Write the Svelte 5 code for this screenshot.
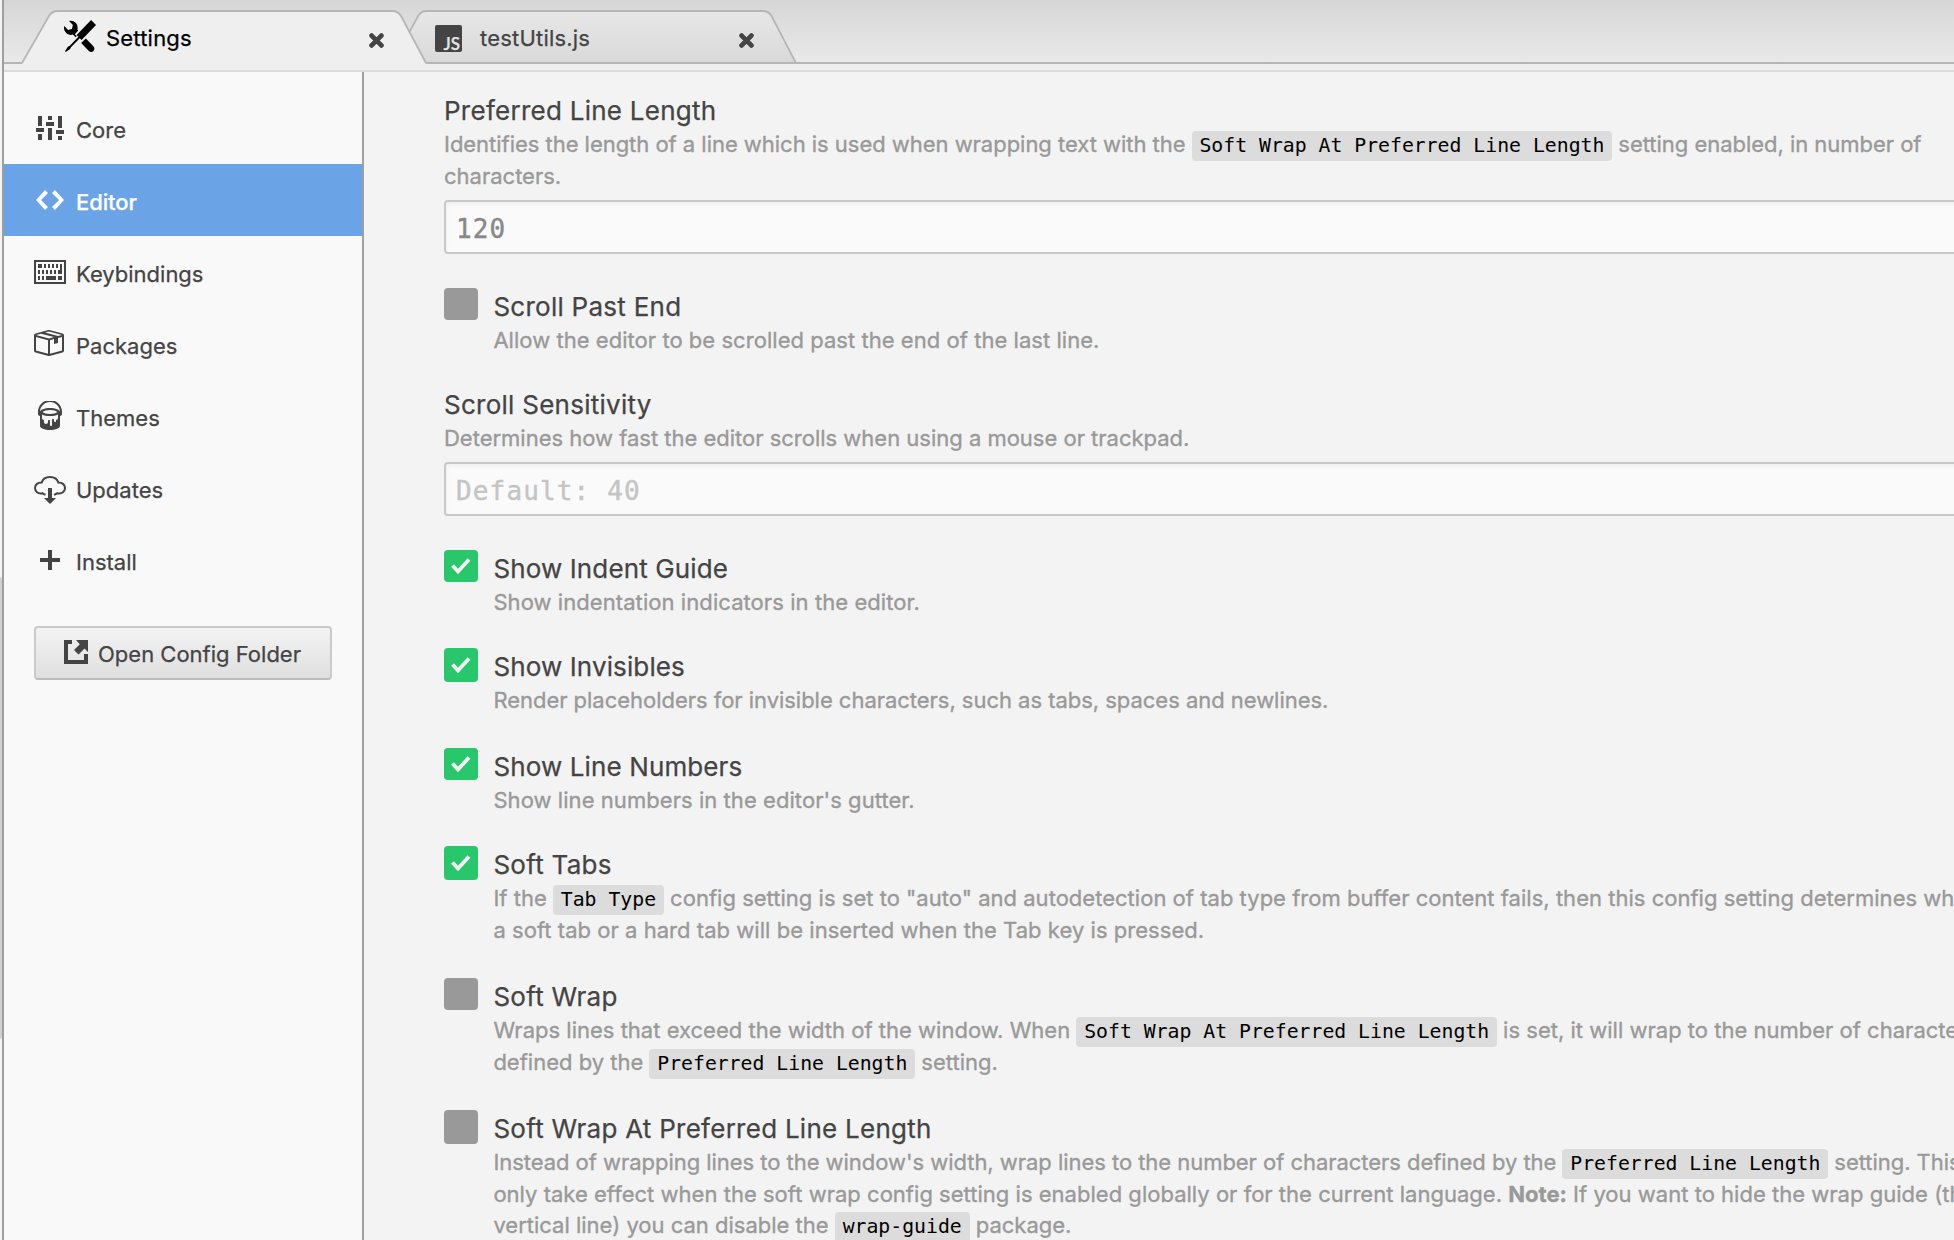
<script>
  const nav = [
    { id: 'core', label: 'Core' },
    { id: 'editor', label: 'Editor', active: true },
    { id: 'keys', label: 'Keybindings' },
    { id: 'packages', label: 'Packages' },
    { id: 'themes', label: 'Themes' },
    { id: 'updates', label: 'Updates' },
    { id: 'install', label: 'Install' }
  ];

  // Description segments: plain strings, { c } for code and { b } for bold.
  // `track` holds the letter spacing of each description line, in px.
  const settings = [
    {
      title: 'Preferred Line Length',
      input: '120',
      track: [-0.03, 0],
      lines: [
        ['Identifies the length of a line which is used when wrapping text with the ', { c: 'Soft Wrap At Preferred Line Length' }, ' setting enabled, in number of'],
        ['characters.']
      ]
    },
    { title: 'Scroll Past End', check: 'off', loose: true, track: [0.04], lines: [['Allow the editor to be scrolled past the end of the last line.']] },
    {
      title: 'Scroll Sensitivity',
      placeholder: 'Default: 40',
      track: [-0.01],
      lines: [['Determines how fast the editor scrolls when using a mouse or trackpad.']]
    },
    { title: 'Show Indent Guide', snug: true, check: 'on', track: [0.07], lines: [['Show indentation indicators in the editor.']] },
    { title: 'Show Invisibles', snug: true, check: 'on', tall: true, loose: true, track: [-0.03], lines: [['Render placeholders for invisible characters, such as tabs, spaces and newlines.']] },
    { title: 'Show Line Numbers', snug: true, check: 'on', track: [0.06], lines: [["Show line numbers in the editor's gutter."]] },
    {
      title: 'Soft Tabs', check: 'on', tall: true, loose: true,
      track: [0.02, 0.04],
      lines: [
        ['If the ', { c: 'Tab Type' }, ' config setting is set to "auto" and autodetection of tab type from buffer content fails, then this config setting determines whether'],
        ['a soft tab or a hard tab will be inserted when the Tab key is pressed.']
      ]
    },
    {
      title: 'Soft Wrap', check: 'off', loose: true,
      track: [0.01, 0],
      lines: [
        ['Wraps lines that exceed the width of the window. When ', { c: 'Soft Wrap At Preferred Line Length' }, ' is set, it will wrap to the number of characters'],
        ['defined by the ', { c: 'Preferred Line Length' }, ' setting.']
      ]
    },
    {
      title: 'Soft Wrap At Preferred Line Length', check: 'off', tall: true,
      track: [-0.04, 0.02, 0],
      lines: [
        ["Instead of wrapping lines to the window's width, wrap lines to the number of characters defined by the ", { c: 'Preferred Line Length' }, ' setting. This will'],
        ['only take effect when the soft wrap config setting is enabled globally or for the current language. ', { b: 'Note:' }, ' If you want to hide the wrap guide (the'],
        ['vertical line) you can disable the ', { c: 'wrap-guide' }, ' package.']
      ]
    }
  ];
</script>

{#snippet close()}
  <svg class="close" width="15" height="15" viewBox="0 0 15 15"><path d="M2.6 2.6l9.8 9.8M12.4 2.6L2.6 12.4" stroke="#444" stroke-width="4.8" stroke-linecap="round" /></svg>
{/snippet}

{#snippet icon(id)}
  <svg class="icon" width="32" height="32" viewBox="0 0 32 32" fill="currentColor">
    {#if id === 'core'}
      <path d="M4 3h4v10H4zM2 15h8v4H2zM4 21h4v6H4zM14 3h4v4h-4zM12 9h8v4h-8zM14 15h4v12h-4zM24 3h4v12h-4zM22 17h8v4h-8zM24 23h4v4h-4z" />
    {:else if id === 'editor'}
      <path transform="translate(2 -1) scale(2)" d="M9.5 3L8 4.5 11.5 8 8 11.5 9.5 13 14 8 9.5 3zm-5 0L0 8l4.5 5L6 11.5 2.5 8 6 4.5 4.5 3z" />
    {:else if id === 'keys'}
      <g transform="translate(0 3)">
        <path fill-rule="evenodd" d="M0 0h32v24H0zM2 2v20h28V2z" />
        <path d="M4 4h4v4H4zM10 4h2v4h-2zM14 4h2v4h-2zM18 4h2v4h-2zM22 4h2v4h-2zM26 4h2v10h-4v-4h2zM4 10h2v4H4zM8 10h2v4H8zM12 10h2v4h-2zM16 10h2v4h-2zM20 10h2v4h-2zM4 16h2v4H4zM8 16h2v4H8zM12 16h10v4H12zM24 16h4v4h-4z" />
      </g>
    {:else if id === 'packages'}
      <path transform="translate(-2 -2) scale(2)" d="M1 4.27v7.47c0 .45.3.84.75.97l6.5 1.73c.16.05.34.05.5 0l6.5-1.73c.45-.13.75-.52.75-.97V4.27c0-.45-.3-.84-.75-.97l-6.5-1.74a1.4 1.4 0 0 0-.5 0L1.75 3.3c-.45.13-.75.52-.75.97zm7 9.09l-6-1.59V5l6 1.61v6.75zM2 4l2.5-.67L11 5.06l-2.5.67L2 4zm13 7.77l-6 1.59V6.61l2-.55V8.5l2-.53V5.53L15 5v6.77zm-2-7.24L6.5 2.8l2-.53L15 4l-2 .53z" />
    {:else if id === 'themes'}
      <path transform="translate(4 -1) scale(2)" d="M6 0C2.69 0 0 2.69 0 6v1c0 .55.45 1 1 1v5c0 1.1 2.24 2 5 2s5-.9 5-2V8c.55 0 1-.45 1-1V6c0-3.31-2.69-6-6-6zm3 10v.5c0 .28-.22.5-.5.5s-.5-.22-.5-.5V10c0-.28-.22-.5-.5-.5s-.5.22-.5.5v2.5c0 .28-.22.5-.5.5s-.5-.22-.5-.5v-2c0-.28-.22-.5-.5-.5s-.5.22-.5.5v.5c0 .55-.45 1-1 1s-1-.45-1-1v-1c-.55 0-1-.45-1-1V7.2c.91.49 2.36.8 4 .8 1.64 0 3.09-.31 4-.8V9c0 .55-.45 1-1 1zM6 7c-1.68 0-3.12-.41-3.71-1C2.88 5.41 4.32 5 6 5c1.68 0 3.12.41 3.71 1-.59.59-2.03 1-3.71 1zm0-3c-2.76 0-5 .89-5 2 0-2.76 2.24-5 5-5s5 2.24 5 5c0-1.1-2.24-2-5-2z" />
    {:else if id === 'updates'}
      <path fill="none" stroke="currentColor" stroke-width="2" d="M11.5 21.8C10 21.3 9.2 20.6 8.5 20.2C4 21.5 1 18.3 1 15C1 11.5 4 9.3 7.7 9.5C8.8 5.800 12 4 16 4S23.200 5.800 24.300 9.500C28 9.300 31 11.500 31 15C31 18.300 28 21.200 23.500 20.200C22.800 20.600 21.500 21.500 20 21.900" />
      <path d="M14 15h4v10h4l-6 6-6-6h4z" />
    {:else}
      <path d="M14 5h4v8h8v4h-8v8h-4v-8H6v-4h8z" />
    {/if}
  </svg>
{/snippet}

<div class="window">
  <div class="edge"><div class="thumb"></div></div>
  <div class="pane">
    <header class="tabs">
      <svg class="shapes" width="1950" height="72" viewBox="4 0 1950 72" fill="none">
        <defs>
          <linearGradient id="idle" x1="0" y1="0" x2="0" y2="1">
            <stop offset="0" stop-color="#e7e7e7" />
            <stop offset="1" stop-color="#d9d9d9" />
          </linearGradient>
        </defs>
        <path d="M392 63L418.5 15.5Q421 11 427 11H763Q768.5 11 771.5 16L796 63Z" fill="url(#idle)" stroke="#b6b6b6" stroke-width="1.8" />
        <path d="M4 63H1954" stroke="#b6b6b6" stroke-width="2" />
        <path d="M4 64H1954V72H4Z" fill="#efefef" />
        <path d="M22 64L49 16Q52 11 58 11H392Q398 11 401 16L426 64Z" fill="#efefef" />
        <path d="M22 63L49 16Q52 11 58 11H392Q398 11 401 16L426 63" stroke="#b6b6b6" stroke-width="1.8" />
        <path d="M4 71H1954" stroke="#dcdcdc" stroke-width="2" />
      </svg>
      <div class="tab active">
        <svg width="32" height="32" viewBox="0 0 16 16"><path d="M4.48 7.27c.26.26 1.28 1.33 1.28 1.33l.56-.58-.88-.91 1.69-1.8s-.76-.74-.43-.45c.32-1.19.03-2.51-.87-3.44C4.93.5 3.66.2 2.52.51l1.93 2-.51 1.96-1.89.52-1.93-1.99C-.19 4.17.1 5.48 1 6.4c.94.98 2.29 1.26 3.48.87zm6.44 1.94l-2.33 2.3 3.84 3.98c.31.33.73.49 1.14.49.41 0 .82-.16 1.14-.49.63-.65.63-1.7 0-2.35l-3.79-3.93zM16 2.53L13.55 0 6.33 7.46l.88.91-4.31 4.46-.99.53-1.39 2.27.35.37 2.2-1.44.51-1.02L7.9 9.08l.88.91L16 2.53z" /></svg>
        <span class="name">Settings</span>
        {@render close()}
      </div>
      <div class="tab idle">
        <span class="js"><span>JS</span></span>
        <span class="name">testUtils.js</span>
        {@render close()}
      </div>
    </header>

    <div class="body">
      <nav>
        {#each nav as item}
          <div class="nav-item" class:selected={item.active}>
            {@render icon(item.id)}
            <span>{item.label}</span>
          </div>
        {/each}
        <div class="open">
          <svg width="24" height="24" viewBox="0 0 24 24" fill="#444"><path d="M0 0h8v4H4v16h16v-6h4v10H0zM12 0h12v12l-3.500-3.500-6 6L10 10l5.800-5.800z" /></svg>
          <span>Open Config Folder</span>
        </div>
      </nav>

      <main>
        {#each settings as s}
          <section class:boxed={s.check} class:loose={s.loose}>
            {#if s.check}
              <div class="check" class:on={s.check === 'on'} class:tall={s.tall}>
                {#if s.check === 'on'}
                  <svg width="20" height="16" viewBox="0 0 20 16" fill="none"><path d="M1.500 7.500L7 13.500L18 1.500" stroke="#f3f3f3" stroke-width="3.800" /></svg>
                {/if}
              </div>
            {/if}
            <div class="text">
              <h3 class:snug={s.snug}>{s.title}</h3>
              {#each s.lines as line, i}
                <p style:letter-spacing="{s.track[i]}px">{#each line as seg}{#if seg.c}<code>{seg.c}</code>{:else if seg.b}<strong>{seg.b}</strong>{:else}{seg}{/if}{/each}</p>
              {/each}
            </div>
            {#if s.input}<div class="field">{s.input}</div>{/if}
            {#if s.placeholder}<div class="field hint">{s.placeholder}</div>{/if}
          </section>
        {/each}
      </main>
    </div>
  </div>
</div>

<style>
  :global(body) { overflow: hidden; }
  .window {
    display: flex;
    width: 1954px;
    height: 1240px;
    overflow: hidden;
    background: #f3f3f3;
    color: #444;
    font: 22px/32px Inter, "Liberation Sans", sans-serif;
    -webkit-text-stroke: 0.25px currentColor;
  }
  .edge { width: 2px; padding-top: 577px; box-sizing: border-box; flex: none; }
  .thumb { height: 462px; background: #d0d0d0; border-radius: 0 2px 2px 0; }
  .pane {
    flex: 1;
    min-width: 0;
    display: flex;
    flex-direction: column;
    border-left: 2px solid #9f9f9f;
  }
  .tabs {
    position: relative;
    flex: none;
    display: flex;
    height: 72px;
    background: linear-gradient(#d6d6d6, #e9e9e9 62px);
  }
  .shapes { position: absolute; left: 0; top: 0; }
  .tab { position: relative; display: flex; align-items: flex-start; box-sizing: border-box; padding-top: 20px; }
  .tab.active { width: 400px; padding-left: 60px; padding-right: 20px; color: #000; }
  .tab.idle { width: 370px; padding-left: 31px; padding-right: 20px; }
  .name { flex: 1; line-height: 32px; padding-top: 2px; }
  .active .name { margin-left: 10px; letter-spacing: 0.2px; }
  .idle .name { margin-left: 18px; letter-spacing: 0.2px; }
  .close { margin-top: 13px; }
  .js {
    display: flex;
    align-items: flex-end;
    justify-content: flex-end;
    width: 27px;
    height: 27px;
    margin-top: 5px;
    border-radius: 2px;
    background: #444;
    color: #e4e4e4;
    font: 600 17px/17px Lato, sans-serif;
  }
  .js span { margin-right: 2px; margin-bottom: 0; }

  .body { flex: 1; min-height: 0; display: flex; }
  nav {
    flex: none;
    width: 358px;
    padding-top: 20px;
    background: #f9f9f9;
    border-right: 2px solid #9f9f9f;
  }
  .nav-item {
    display: flex;
    align-items: center;
    height: 72px;
    padding-left: 30px;
    gap: 10px;
    box-sizing: border-box;
  }
  .nav-item span { padding-top: 4px; }
  .nav-item .icon { flex: none; margin-top: 2px; }
  .selected { background: #6aa3e6; color: #fff; font-weight: 500; letter-spacing: -0.1px; }
  .open {
    display: flex;
    align-items: center;
    justify-content: center;
    gap: 10px;
    width: 298px;
    height: 54px;
    box-sizing: border-box;
    margin: 30px 0 0 30px;
    padding-right: 1px;
    border: 2px solid #cacaca;
    border-bottom-color: #bcbcbc;
    border-radius: 4px;
    background: linear-gradient(#f3f3f3, #dfdfdf);
  }
  .open svg { margin-bottom: 2px; }
  .open span { padding-top: 2px; }

  main { flex: 1; min-width: 0; overflow: hidden; padding: 22px 0 0 80px; white-space: nowrap; }
  section { margin-bottom: 34px; }
  .boxed { display: flex; margin-bottom: 30px; }
  .boxed.loose { margin-bottom: 32px; }
  .boxed .text { padding: 2px 0 0 15.400px; }
  h3 { margin: 0; font-size: 26px; font-weight: 400; line-height: 34px; letter-spacing: 0.26px; }
  h3.snug { letter-spacing: 0.12px; }
  p { margin: 0; height: 32px; color: #999; -webkit-text-stroke-width: 0.35px; }
  p:nth-of-type(3) { margin-top: -1px; }
  code {
    padding: 3px 7.800px 4px;
    border-radius: 4px;
    background: #dcdcdc;
    color: #000;
    font: 19.800px "DejaVu Sans Mono", monospace;
    letter-spacing: 0;
    -webkit-text-stroke-width: 0;
  }
  strong { font-weight: 700; }
  .field {
    height: 54px;
    margin: 8px -8px 0 0;
    padding: 2px 0 0 10px;
    box-sizing: border-box;
    border: 2px solid #c8c8c8;
    border-radius: 4px;
    background: #fafafa;
    box-shadow: inset 0 2px 4px rgba(0, 0, 0, 0.05);
    color: #888;
    font: 26px/50px "DejaVu Sans Mono", monospace;
    letter-spacing: 1.150px;
    -webkit-text-stroke-width: 0.4px;
  }
  .hint { color: #c4c4c4; }
  .check {
    display: flex;
    align-items: center;
    justify-content: center;
    flex: none;
    width: 34px;
    height: 32px;
    border-radius: 4px;
    background: #999;
  }
  .check.tall { height: 34px; }
  .check.on { background: #29c76b; }
</style>
